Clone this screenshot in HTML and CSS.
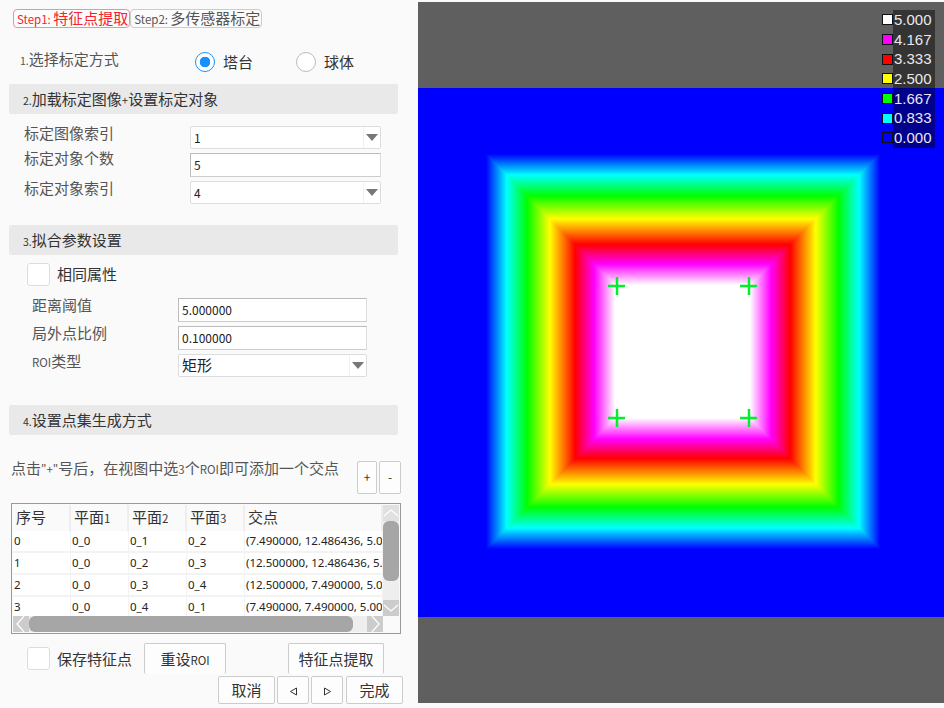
FILE: index.html
```html
<!DOCTYPE html>
<html lang="zh">
<head>
  <meta charset="UTF-8">
  <title>特征点提取</title>
  <link rel="stylesheet" href="styles.css">
</head>
<body>
<div class="app">
  <div class="panel">

    <div class="tabs">
      <div class="tab active"><small>Step1:</small> 特征点提取</div>
      <div class="tab"><small>Step2:</small> 多传感器标定</div>
    </div>

    <div class="method">
      <div class="method-label"><span class="num">1.</span>选择标定方式</div>
      <div class="radio on"></div><div class="radio-text">塔台</div>
      <div class="radio"></div><div class="radio-text">球体</div>
    </div>

    <div class="section s2"><span class="num">2.</span>加载标定图像<small>+</small>设置标定对象</div>
    <div class="form f2">
      <div class="label">标定图像索引</div>
      <div class="select">1<i class="arrow"></i></div>
      <div class="label">标定对象个数</div>
      <div class="input tall">5</div>
      <div class="label">标定对象索引</div>
      <div class="select">4<i class="arrow"></i></div>
    </div>

    <div class="section s3"><span class="num">3.</span>拟合参数设置</div>
    <div class="check-row c1"><div class="check"></div><div class="check-text">相同属性</div></div>
    <div class="form f3">
      <div class="label">距离阈值</div>
      <div class="input tall">5.000000</div>
      <div class="label">局外点比例</div>
      <div class="input tall">0.100000</div>
      <div class="label"><small>ROI</small>类型</div>
      <div class="select cjk">矩形<i class="arrow"></i></div>
    </div>

    <div class="section s4"><span class="num">4.</span>设置点集生成方式</div>
    <div class="hint-row">
      <div class="hint">点击<small>"+"</small>号后，在视图中选<small>3</small>个<small>ROI</small>即可添加一个交点</div>
      <button class="btn plus">+</button>
      <button class="btn minus">-</button>
    </div>

    <div class="table-box">
      <div class="table-view">
        <table>
          <tr><th>序号</th><th>平面<small>1</small></th><th>平面<small>2</small></th><th>平面<small>3</small></th><th>交点</th></tr>
          <tr><td>0</td><td>0_0</td><td>0_1</td><td>0_2</td><td>(7.490000, 12.486436, 5.0</td></tr>
          <tr><td>1</td><td>0_0</td><td>0_2</td><td>0_3</td><td>(12.500000, 12.486436, 5.</td></tr>
          <tr><td>2</td><td>0_0</td><td>0_3</td><td>0_4</td><td>(12.500000, 7.490000, 5.0</td></tr>
          <tr><td>3</td><td>0_0</td><td>0_4</td><td>0_1</td><td>(7.490000, 7.490000, 5.00</td></tr>
        </table>
      </div>
      <div class="vbar">
        <svg class="end" width="16" height="16" viewBox="0 0 16 16"><path d="M1 11 8 5l7 6" fill="none" stroke="#fff" stroke-width="1.2"/></svg>
        <div class="vthumb"></div>
        <svg class="end down" width="16" height="16" viewBox="0 0 16 16"><path d="M1 5l7 6 7-6" fill="none" stroke="#fff" stroke-width="1.2"/></svg>
      </div>
      <div class="hbar">
        <svg class="end" width="16" height="16" viewBox="0 0 16 16"><path d="M11 0 4 8l7 8" fill="none" stroke="#fff" stroke-width="1.2"/></svg>
        <div class="hthumb"></div>
        <svg class="end right" width="16" height="16" viewBox="0 0 16 16"><path d="M5 0l7 8-7 8" fill="none" stroke="#fff" stroke-width="1.2"/></svg>
      </div>
    </div>

    <div class="action-row">
      <div class="check-row"><div class="check"></div><div>保存特征点</div></div>
      <button class="btn reset">重设<small>ROI</small></button>
      <button class="btn extract">特征点提取</button>
    </div>
    <div class="nav-row">
      <button class="btn wide">取消</button>
      <button class="btn step"><svg width="9" height="9" viewBox="0 0 9 9"><path d="M7.5 1v7L1.500 4.500z" fill="none" stroke="#333"/></svg></button>
      <button class="btn step"><svg width="9" height="9" viewBox="0 0 9 9"><path d="M1.500 1v7l6-3.500z" fill="none" stroke="#333"/></svg></button>
      <button class="btn wide last">完成</button>
    </div>
  </div>

  <div class="view">
    <svg class="heat" width="526" height="529" viewBox="418 88 526 529" shape-rendering="crispEdges">
      <defs>
        <linearGradient id="gLeft" gradientUnits="userSpaceOnUse" x1="486" y1="0" x2="615" y2="0">
          <stop offset="0" stop-color="#00f"/><stop offset=".16" stop-color="#0ff"/><stop offset=".32" stop-color="#0f0"/>
          <stop offset=".495" stop-color="#ff0"/><stop offset=".69" stop-color="#f00"/><stop offset=".84" stop-color="#f0f"/><stop offset="1" stop-color="#fff"/>
        </linearGradient>
        <linearGradient id="gRight" gradientUnits="userSpaceOnUse" x1="880" y1="0" x2="750" y2="0">
          <stop offset="0" stop-color="#00f"/><stop offset=".16" stop-color="#0ff"/><stop offset=".32" stop-color="#0f0"/>
          <stop offset=".495" stop-color="#ff0"/><stop offset=".69" stop-color="#f00"/><stop offset=".84" stop-color="#f0f"/><stop offset="1" stop-color="#fff"/>
        </linearGradient>
        <linearGradient id="gTop" gradientUnits="userSpaceOnUse" x1="0" y1="154" x2="0" y2="285">
          <stop offset="0" stop-color="#00f"/><stop offset=".16" stop-color="#0ff"/><stop offset=".32" stop-color="#0f0"/>
          <stop offset=".495" stop-color="#ff0"/><stop offset=".69" stop-color="#f00"/><stop offset=".84" stop-color="#f0f"/><stop offset="1" stop-color="#fff"/>
        </linearGradient>
        <linearGradient id="gBottom" gradientUnits="userSpaceOnUse" x1="0" y1="549" x2="0" y2="418">
          <stop offset="0" stop-color="#00f"/><stop offset=".16" stop-color="#0ff"/><stop offset=".32" stop-color="#0f0"/>
          <stop offset=".495" stop-color="#ff0"/><stop offset=".69" stop-color="#f00"/><stop offset=".84" stop-color="#f0f"/><stop offset="1" stop-color="#fff"/>
        </linearGradient>
      </defs>
      <rect x="418" y="88" width="526" height="529" fill="#00f"/>
      <polygon points="486,154 615,285 615,418 486,549" fill="url(#gLeft)"/>
      <polygon points="880,154 750,285 750,418 880,549" fill="url(#gRight)"/>
      <polygon points="486,154 880,154 750,285 615,285" fill="url(#gTop)"/>
      <polygon points="486,549 880,549 750,418 615,418" fill="url(#gBottom)"/>
      <rect x="615" y="285" width="135" height="133" fill="#fff"/>
      <g stroke="#00f030" stroke-width="2.500" shape-rendering="auto">
        <path d="M608 286h17M617 277v18"/>
        <path d="M740 286h17M749 277v18"/>
        <path d="M608 418h17M617 409v18"/>
        <path d="M740 418h17M749 409v18"/>
      </g>
    </svg>
    <div class="legend">
      <div class="legend-row"><i class="swatch c-white"></i><span>5.000</span></div>
      <div class="legend-row"><i class="swatch c-magenta"></i><span>4.167</span></div>
      <div class="legend-row"><i class="swatch c-red"></i><span>3.333</span></div>
      <div class="legend-row"><i class="swatch c-yellow"></i><span>2.500</span></div>
      <div class="legend-row"><i class="swatch c-green"></i><span>1.667</span></div>
      <div class="legend-row"><i class="swatch c-cyan"></i><span>0.833</span></div>
      <div class="legend-row"><i class="swatch c-blue"></i><span>0.000</span></div>
    </div>
  </div>
</div>
</body>
</html>
```
FILE: styles.css
```css
* {
  box-sizing: border-box;
}

html, body {
  margin: 0;
  height: 708px;
  overflow: hidden;
  background-color: #fafafa;
}

body {
  font-family: "Noto Sans CJK SC", "Noto Sans", sans-serif;
  font-size: 15px;
  color: #333;
}

.app {
  display: flex;
  height: 708px;
}

.panel {
  width: 418px;
  flex: none;
  padding: 9px 0 0 9px;
}

small {
  font-size: 11.500px;
}

.num {
  font-size: 10.500px;
}

/* tabs */
.tabs {
  display: flex;
  margin-left: 4px;
}

.tab {
  height: 19px;
  line-height: 16px;
  padding: 0 1px 0 3px;
  border: 1px solid #ccc;
  border-radius: 4px;
  white-space: nowrap;
  word-spacing: -1px;
  color: #555;
  background-color: #fbfbfb;
}

.tab.active {
  color: #f5222d;
  border-color: #ff8a95;
}

/* section 1 */
.method {
  display: flex;
  align-items: center;
  height: 22px;
  margin-top: 23px;
  margin-left: 11px;
}

.method-label {
  width: 175px;
  color: #555;
  margin-top: -7px;
}

.radio {
  width: 20px;
  height: 20px;
  border: 1px solid #bbb;
  border-radius: 50%;
  background-color: #fff;
}

.radio.on {
  border-color: #1890ff;
  background: radial-gradient(circle, #1890ff 0 5px, #fff 5.500px);
}

.radio-text {
  width: 81px;
  padding-left: 8px;
  margin-top: -1px;
}

.section {
  width: 389px;
  height: 30px;
  line-height: 30px;
  padding-left: 14px;
  background-color: #e9e9e9;
  border-radius: 2px;
}

.s2 { margin-top: 11px; }
.s3 { margin-top: 21px; }
.s4 { margin-top: 28px; }

/* forms */
.form {
  display: grid;
  align-items: start;
}

.f2 {
  grid-template-columns: 166px 191px;
  margin: 12px 0 0 15px;
  row-gap: 4px;
}

.f2 .label:nth-child(3) {
  margin-top: -5px;
}

.f3 {
  grid-template-columns: 146px 189px;
  margin: 12px 0 0 23px;
  row-gap: 4px;
}

.label {
  color: #555;
  line-height: 20px;
  margin-top: -3px;
}

.select, .input {
  position: relative;
  height: 23px;
  line-height: 22px;
  padding-left: 3px;
  font-size: 12px;
  color: #222;
  background-color: #fff;
  border: 1px solid #ddd;
  border-radius: 2px;
}

.input.tall {
  height: 24px;
  border-color: #bbb #ddd #ccc #bbb;
  border-radius: 0;
}

.select.cjk {
  font-size: 15px;
  line-height: 20px;
}

.arrow {
  position: absolute;
  right: 1px;
  top: 0;
  bottom: 0;
  width: 16px;
  border-left: 1px solid #f0f0f0;
}

.arrow::after {
  content: "";
  position: absolute;
  left: 2px;
  top: 7px;
  border-left: 6px solid transparent;
  border-right: 6px solid transparent;
  border-top: 7px solid #777;
}

/* checkboxes */
.check-row {
  display: flex;
  align-items: center;
  gap: 7px;
}

.c1 {
  margin: 8px 0 0 18px;
}

.check-text {
  margin-top: -2px;
}

.check {
  width: 23px;
  height: 23px;
  background-color: #fff;
  border: 1px solid #ddd;
  border-radius: 3px;
}

/* hint and buttons */
.btn {
  font-family: inherit;
  color: #333;
  font-size: 15px;
  padding: 0 0 2px;
  background-color: #fdfdfd;
  border: 1px solid #ccc;
  border-radius: 2px;
}

.hint-row {
  display: flex;
  align-items: flex-start;
  margin-top: 26px;
  margin-left: 2px;
}

.hint {
  width: 346px;
  color: #555;
  white-space: nowrap;
  line-height: 16px;
  margin-top: -1px;
}

.plus, .minus {
  height: 33px;
  font-size: 12px;
}

.plus { width: 20px; margin-right: 2px; }
.minus { width: 22px; }

/* table */
.table-box {
  display: grid;
  grid-template-columns: 370px 16px;
  grid-template-rows: 111px 16px;
  width: 390px;
  height: 131px;
  margin: 9px 0 0 2px;
  padding: 1px;
  border: 1px solid #999;
  background-color: #fafafa;
}

.table-view {
  overflow: hidden;
  background-color: #f0f0f0;
}

table {
  table-layout: fixed;
  width: 370px;
  border-collapse: separate;
  border-spacing: 0;
}

th {
  height: 26px;
  font-weight: normal;
  text-align: left;
  padding: 0 0 3px 3px;
  background-color: #fafafa;
  border-right: 2px solid #eee;
  overflow: hidden;
  white-space: nowrap;
}

th:nth-child(-n+4), td:nth-child(-n+4) {
  width: 58px;
}

td {
  height: 22px;
  font-family: "Noto Sans", sans-serif;
  font-size: 11.500px;
  color: #222;
  padding: 0 0 1px 1px;
  background-color: #fff;
  border-right: 1px solid #f3f3f3;
  border-bottom: 2px solid #f3f3f3;
  overflow: hidden;
  white-space: nowrap;
}

.vbar {
  display: flex;
  flex-direction: column;
  background-color: #eee;
}

.vthumb {
  width: 16px;
  height: 60px;
  background-color: #a6a6a6;
  border-radius: 6px;
}

.vbar .end { background-color: #e0e0e0; }
.vbar .down { margin-top: auto; background-color: #ccc; }

.hbar {
  display: flex;
  align-items: center;
  background-color: #eee;
}

.hthumb {
  width: 324px;
  height: 16px;
  background-color: #a6a6a6;
  border-radius: 6px;
}

.hbar .end { background-color: #ccc; }
.hbar .right { margin-left: auto; }

/* bottom rows */
.action-row {
  display: flex;
  align-items: center;
  height: 31px;
  margin: 9px 0 0 18px;
}

.action-row .check-row {
  width: 117px;
}

.reset {
  width: 82px;
  height: 31px;
  border-bottom: none;
}

.extract {
  width: 96px;
  height: 31px;
  margin-left: 62px;
  border-bottom: none;
}

.nav-row {
  display: flex;
  gap: 2px;
  margin: 2px 0 0 209px;
}

.nav-row .btn {
  height: 28px;
}

.wide { width: 57px; }
.step { width: 32px; }
.nav-row .last { margin-left: 1px; }

/* viewer */
.view {
  position: relative;
  flex: 1;
  margin-top: 2px;
  height: 701px;
  padding-top: 86px;
  background-color: #5f5f5f;
}

.heat {
  display: block;
}

.legend {
  position: absolute;
  top: 8px;
  left: 464px;
}

.legend-row {
  display: flex;
  align-items: center;
  height: 19.700px;
}

.swatch {
  flex: none;
  width: 11px;
  height: 11px;
  border: 1px solid #111;
}

.legend-row span {
  width: 42px;
  height: 19.700px;
  line-height: 19.700px;
  padding-left: 1px;
  font-family: "Liberation Sans", sans-serif;
  font-size: 15px;
  color: #e8e8f0;
  background-color: rgba(0, 0, 0, 0.45);
}

.c-white { background-color: #fff; }
.c-magenta { background-color: #f0f; }
.c-red { background-color: #f00; }
.c-yellow { background-color: #ff0; }
.c-green { background-color: #0f0; }
.c-cyan { background-color: #0ff; }
.c-blue { background-color: #00f; }
```
